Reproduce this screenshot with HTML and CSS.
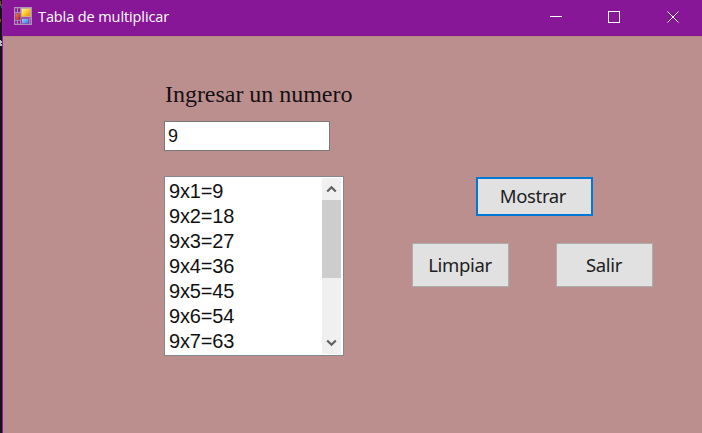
FILE: index.html
```html
<!DOCTYPE html>
<html lang="es">
<head>
<meta charset="utf-8">
<title>Tabla de multiplicar</title>
<link rel="stylesheet" href="styles.css">
</head>
<body>
<div class="desktop">
  <div class="backdrop">
    <svg width="2" height="433" shape-rendering="crispEdges"><path fill="#8a4a20" d="M0 1h1v5H0zM0 19h1v3H0z"/><path fill="#31516b" d="M1 4h1v4H1z"/><path fill="#b8c2c5" d="M0 40h1v1h1v2H1v1h1v2H0z"/></svg>
  </div>
  <main class="window">
    <header class="titlebar">
      <svg class="app-icon" width="18" height="18" viewBox="0 0 18 18">
        <defs>
          <linearGradient id="gold" x2="1" y2="1"><stop stop-color="#fff2a0"/><stop offset=".5" stop-color="#ffc72c"/><stop offset="1" stop-color="#dc8d12"/></linearGradient>
          <linearGradient id="red" x2="1" y2="1"><stop stop-color="#ee8168"/><stop offset="1" stop-color="#a91814"/></linearGradient>
          <linearGradient id="blue" x2="1" y2="1"><stop stop-color="#9acbff"/><stop offset="1" stop-color="#377bd9"/></linearGradient>
        </defs>
        <path fill="none" stroke="#b08fb6" stroke-width="1.2" d="M.6.6h16.800v16.800H.6zM6.700 1v16M1 5.700h6M1 13.200h6M7 11h10M15.800 11v6M3.500 1v5M3.500 13v4"/>
        <path fill="#c8b08c" d="M7 1h10v9H7z"/>
        <path fill="url(#gold)" d="M8 2h8v7H8z"/>
        <path fill="url(#red)" d="M1.500 6.500h5v6h-5z"/>
        <path fill="url(#blue)" d="M8 12h6.500v4.500H8z"/>
      </svg>
      <h1 class="title">Tabla de multiplicar</h1>
      <svg class="controls" width="132" height="14" viewBox="0 0 132 14" fill="none" stroke="#fff"><path shape-rendering="crispEdges" d="M0 6.500h12M58.500 1.500h11v11h-11z"/><path d="M117.500 1.500l11 11M128.500 1.500l-11 11"/></svg>
    </header>
    <section class="form">
      <div class="entry">
        <label class="label" for="number">Ingresar un numero</label>
        <input class="number" id="number" value="9">
        <div class="listbox">
          <ul class="results">
            <li>9x1=9</li><li>9x2=18</li><li>9x3=27</li><li>9x4=36</li><li>9x5=45</li><li>9x6=54</li><li>9x7=63</li>
          </ul>
          <div class="scrollbar">
            <svg width="19" height="22" fill="none" stroke="#606060" stroke-width="2.2"><path d="M5.200 13.500l4.300-4.300 4.300 4.300"/></svg>
            <div class="thumb"></div>
            <svg class="down" width="19" height="21" fill="none" stroke="#606060" stroke-width="2.2"><path d="M5.200 7.500l4.300 4.300 4.300-4.300"/></svg>
          </div>
        </div>
      </div>
      <div class="actions">
        <button class="button primary">Mostrar</button>
        <div class="row"><button class="button">Limpiar</button><button class="button">Salir</button></div>
      </div>
    </section>
  </main>
</div>
</body>
</html>
```
FILE: styles.css
```css
* { box-sizing: border-box; }
body { margin: 0; overflow: hidden; }
svg { display: block; flex: none; }
.desktop { display: flex; width: 702px; height: 433px; }
.backdrop { width: 2px; background: #17121a; }
.window { width: 700px; border-left: 1px solid #8f1ca8; background: #bc8f8f; }
.titlebar { display: flex; align-items: center; height: 36px; padding: 0 20px 0 11px; background: #881798; color: #fff; }
.app-icon { margin-bottom: 4px; }
.title { margin: 0 0 3px 6px; font: 400 14.5px/20px "Open Sans", sans-serif; letter-spacing: -.1px; white-space: nowrap; }
.controls { margin: 0 0 2px auto; }
.form { display: flex; height: 397px; padding: 42px 0 0 161px; border-top: 1px solid #b58a7c; }
.entry { width: 248px; }
.label { display: block; height: 42px; padding-left: 1px; font: 24px/30px "Liberation Serif", serif; letter-spacing: -.03px; color: #151012; white-space: nowrap; }
.number { display: block; width: 166px; height: 30px; padding: 0 3px; border: 1px solid #7a7a7a; border-radius: 0; outline: 0; background: #fff; font: 18px/26px "Liberation Sans", sans-serif; color: #111; }
.listbox { display: flex; width: 180px; height: 180px; margin-top: 25px; padding: 1px; border: 1px solid #828790; background: #fff; }
.results { flex: 1; margin: 0; padding: 1px 0 0 3px; list-style: none; overflow: hidden; font: 20px/25px "Liberation Sans", sans-serif; letter-spacing: -.15px; color: #111; }
.scrollbar { display: flex; flex-direction: column; width: 20px; padding-right: 1px; background: linear-gradient(to right, #f0f0f0 19px, #fff 19px); }
.thumb { height: 78px; background: #cdcdcd; }
.down { margin-top: auto; }
.actions { width: 241px; padding-top: 98px; }
.row { display: flex; justify-content: space-between; margin-top: 27px; }
.button { display: block; width: 97px; height: 44px; padding: 0 1px 1px 0; border: 1px solid #adadad; border-radius: 0; background: #e1e1e1; font: 18.500px/24px "Noto Sans", sans-serif; letter-spacing: -.35px; color: #202020; }
.primary { width: 117px; height: 39px; margin-left: 64px; padding: 0 3px 2px 0; border: 2px solid #0078d7; }
```
